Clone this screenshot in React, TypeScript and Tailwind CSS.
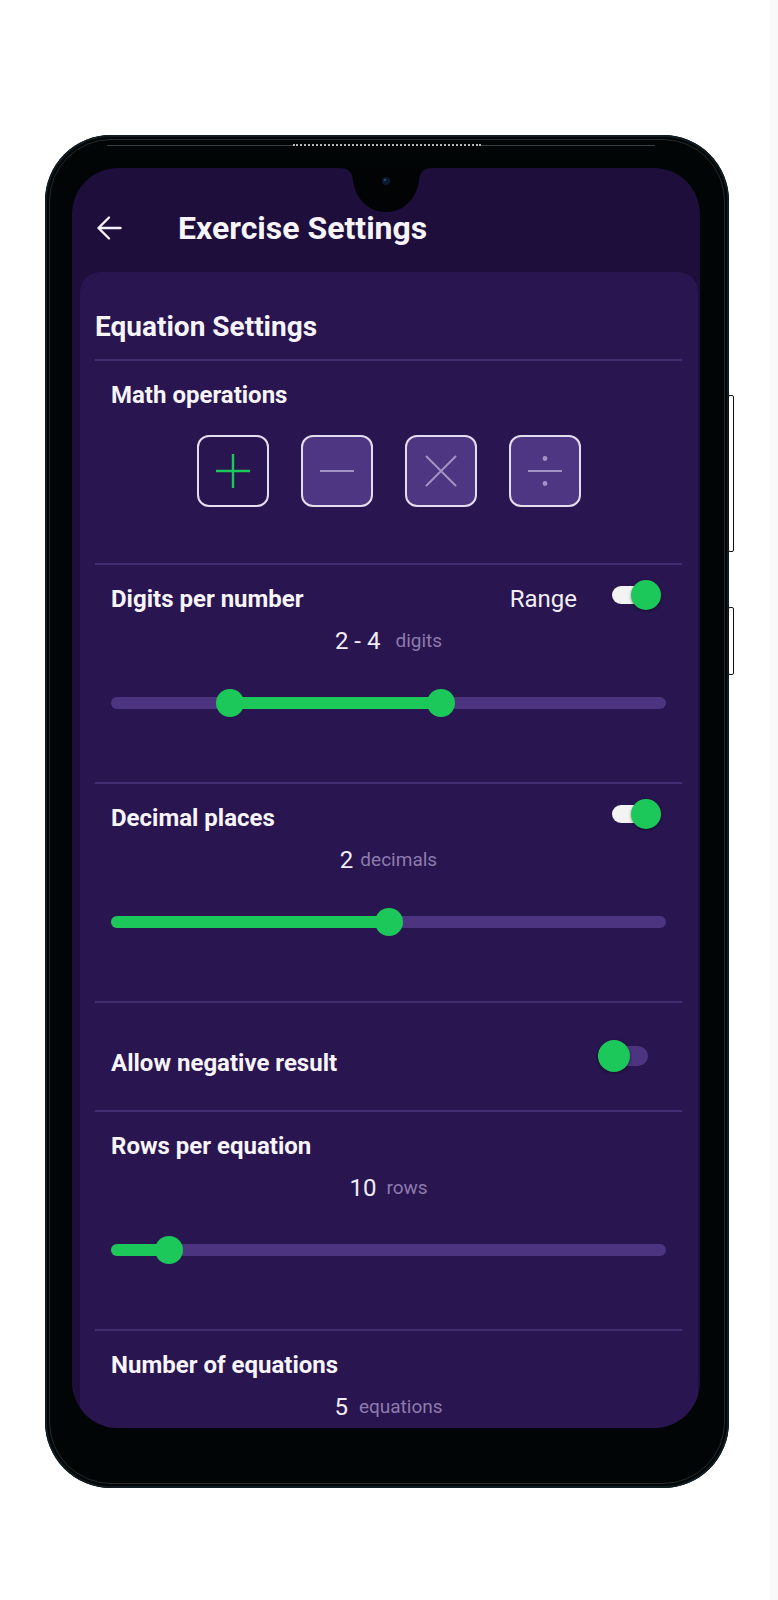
import React from "react";

type RangeSlider = { lo: number; hi?: number };

const TRACK_W = 555;
const THUMB = 28;

function Slider({ lo, hi }: RangeSlider) {
  const usable = TRACK_W - THUMB;
  const px = (f: number) => THUMB / 2 + f * usable;
  const start = hi === undefined ? 0 : px(lo);
  const end = hi === undefined ? px(lo) : px(hi);
  const thumbs = hi === undefined ? [lo] : [lo, hi];
  return (
    <div className="relative mx-auto h-[28px] w-[555px]">
      <div className="absolute inset-x-0 top-[8px] h-[12px] rounded-full bg-[#4d3480]" />
      <div
        className="absolute top-[8px] h-[12px] rounded-full bg-[#1cc85a]"
        style={{ left: start, width: end - start }}
      />
      {thumbs.map((f, i) => (
        <div
          key={i}
          className="absolute top-0 h-[28px] w-[28px] rounded-full bg-[#1cc85a]"
          style={{ left: px(f) - THUMB / 2 }}
        />
      ))}
    </div>
  );
}

function ToggleOn() {
  return (
    <div className="relative h-[30px] w-[49px] shrink-0">
      <div className="absolute left-0 top-[6px] h-[18px] w-[40px] rounded-full bg-[#f3f3f3]" />
      <div className="absolute right-0 top-0 h-[30px] w-[30px] rounded-full bg-[#1cc85a] shadow-[0_1px_3px_rgba(0,0,0,0.45)]" />
    </div>
  );
}

function ToggleOff() {
  return (
    <div className="relative h-[32px] w-[50px] shrink-0">
      <div className="absolute left-[4px] top-[6px] h-[20px] w-[46px] rounded-full bg-[#4d3480]" />
      <div className="absolute left-0 top-0 h-[32px] w-[32px] rounded-full bg-[#1cc85a] shadow-[0_1px_3px_rgba(0,0,0,0.45)]" />
    </div>
  );
}

function Divider() {
  return <div className="h-[2px] w-full bg-[#412d70]" />;
}

function Value({ n, unit, gap }: { n: string; unit: string; gap: string }) {
  return (
    <div className="mt-[14px] flex h-[28px] items-center justify-center">
      <span className="text-[24px] leading-[28px] text-[#f1edf7]">{n}</span>
      <span className={`text-[19px] leading-[28px] text-[#8d7bae] ${gap}`}>{unit}</span>
    </div>
  );
}

function Label({ children }: { children: React.ReactNode }) {
  return <div className="text-[24px] font-bold leading-[28px] text-[#f7f4fb]">{children}</div>;
}

function OpButton({ active, children }: { active?: boolean; children: React.ReactNode }) {
  return (
    <div
      className={
        active
          ? "flex h-[72px] w-[72px] items-center justify-center rounded-[12px] border-2 border-[#e4ddef] bg-[#29154f]"
          : "flex h-[72px] w-[72px] items-center justify-center rounded-[12px] border-2 border-[#e4ddef] bg-[#4f3682]"
      }
    >
      {children}
    </div>
  );
}

export default function App() {
  return (
    <div className="flex h-[1600px] w-[778px] bg-white font-[Roboto,sans-serif]">
      <div className="w-[770px] pl-[45px] pt-[135px]">
        {/* handset */}
        <div className="relative h-[1353px] w-[684px] rounded-[66px] bg-[#020506] pb-[60px] pl-[27px] pr-[29px] pt-[33px] shadow-[inset_0_0_0_2px_#0f1c21]">
          <div className="pointer-events-none absolute inset-[4px] rounded-[62px] border border-[#222b2e]" />
          {/* earpiece line */}
          <div className="absolute left-[62px] top-[9px] flex h-[2px] w-[548px] items-center">
            <div className="h-[1px] w-[186px] bg-[#3c4042]" />
            <div className="h-[2px] w-[188px] border-t-2 border-dotted border-[#b5b5b5]" />
            <div className="h-[1px] w-[174px] bg-[#3c4042]" />
          </div>
          {/* side keys */}
          <div className="absolute right-[-5px] top-[260px] h-[157px] w-[6px] rounded-[2px] border-[1.5px] border-[#111] bg-white" />
          <div className="absolute right-[-5px] top-[472px] h-[68px] w-[6px] rounded-[2px] border-[1.5px] border-[#111] bg-white" />

          {/* screen */}
          <div className="relative flex h-full w-full flex-col overflow-hidden rounded-[46px] bg-[#1e0e3b]">
            {/* notch */}
            <svg
              className="absolute left-1/2 top-0 -translate-x-1/2"
              width="94"
              height="45"
              viewBox="0 0 94 45"
            >
              <path
                d="M0 0 H94 C84 0 81 4 80 12 C78 31 64 44 47 44 C30 44 16 31 14 12 C13 4 10 0 0 0 Z"
                fill="#020304"
              />
              <circle cx="47" cy="13" r="4" fill="#0b1830" />
              <circle cx="46" cy="12" r="1.3" fill="#2a4670" />
            </svg>

            {/* app bar */}
            <div className="flex h-[104px] shrink-0 items-start pl-[24px] pt-[42px]">
              <div className="flex h-[36px] items-center">
                <svg width="26" height="26" viewBox="0 0 26 26" fill="none">
                  <path
                    d="M24.5 13 H2.5 M13 2.5 L2.5 13 L13 23.5"
                    stroke="#f4f1f9"
                    strokeWidth="2.4"
                    strokeLinecap="round"
                    strokeLinejoin="round"
                  />
                </svg>
              </div>
              <div className="ml-[56px] text-[32px] font-bold leading-[36px] text-[#f7f4fb]">
                Exercise Settings
              </div>
            </div>

            {/* settings card */}
            <div className="ml-[8px] mr-[2px] flex-1 rounded-t-[20px] bg-[#29154f] pl-[15px] pr-[16px] pt-[39px]">
              <div className="text-[28px] font-bold leading-[32px] text-[#f7f4fb]">Equation Settings</div>
              <div className="mt-[16px]">
                <Divider />
              </div>

              {/* operations */}
              <div className="px-[16px] pb-[56px] pt-[20px]">
                <Label>Math operations</Label>
                <div className="mt-[26px] flex justify-center gap-[32px]">
                  <OpButton active>
                    <svg width="38" height="38" viewBox="0 0 38 38">
                      <path d="M19 2 V36 M2 19 H36" stroke="#1cc85a" strokeWidth="2.4" />
                    </svg>
                  </OpButton>
                  <OpButton>
                    <svg width="38" height="38" viewBox="0 0 38 38">
                      <path d="M2 19 H36" stroke="#a293c2" strokeWidth="2" />
                    </svg>
                  </OpButton>
                  <OpButton>
                    <svg width="34" height="34" viewBox="0 0 34 34">
                      <path d="M2 2 L32 32 M32 2 L2 32" stroke="#a293c2" strokeWidth="2" />
                    </svg>
                  </OpButton>
                  <OpButton>
                    <svg width="38" height="38" viewBox="0 0 38 38">
                      <path d="M2 19 H36" stroke="#a293c2" strokeWidth="2" />
                      <circle cx="19" cy="6.5" r="2.4" fill="#a293c2" />
                      <circle cx="19" cy="31.5" r="2.4" fill="#a293c2" />
                    </svg>
                  </OpButton>
                </div>
              </div>
              <Divider />

              {/* digits */}
              <div className="pb-[65px] pt-[20px]">
                <div className="flex items-center px-[16px]">
                  <Label>Digits per number</Label>
                  <div className="ml-auto mr-[5px] flex items-center">
                    <span className="text-[24px] leading-[28px] text-[#f1edf7]">Range</span>
                    <div className="ml-[35px] -mt-[8px]">
                      <ToggleOn />
                    </div>
                  </div>
                </div>
                <Value n="2 - 4" unit="digits" gap="ml-[15px]" />
                <div className="mt-[34px]">
                  <Slider lo={0.2} hi={0.6} />
                </div>
              </div>
              <Divider />

              {/* decimals */}
              <div className="pb-[65px] pt-[20px]">
                <div className="flex items-center px-[16px]">
                  <Label>Decimal places</Label>
                  <div className="ml-auto mr-[5px] -mt-[8px]">
                    <ToggleOn />
                  </div>
                </div>
                <Value n="2" unit="decimals" gap="ml-[7px]" />
                <div className="mt-[34px]">
                  <Slider lo={0.5} />
                </div>
              </div>
              <Divider />

              {/* negative results */}
              <div className="flex h-[107px] items-start px-[16px]">
                <div className="mt-[46px]">
                  <Label>Allow negative result</Label>
                </div>
                <div className="ml-auto mr-[18px] mt-[37px]">
                  <ToggleOff />
                </div>
              </div>
              <Divider />

              {/* rows */}
              <div className="pb-[65px] pt-[20px]">
                <div className="px-[16px]">
                  <Label>Rows per equation</Label>
                </div>
                <Value n="10" unit="rows" gap="ml-[10px]" />
                <div className="mt-[34px]">
                  <Slider lo={0.083} />
                </div>
              </div>
              <Divider />

              {/* equation count */}
              <div className="pt-[20px]">
                <div className="px-[16px]">
                  <Label>Number of equations</Label>
                </div>
                <Value n="5" unit="equations" gap="ml-[11px]" />
              </div>
            </div>
          </div>
        </div>
      </div>
      <div className="h-full w-[8px] bg-[#f9f9f9]" />
    </div>
  );
}
